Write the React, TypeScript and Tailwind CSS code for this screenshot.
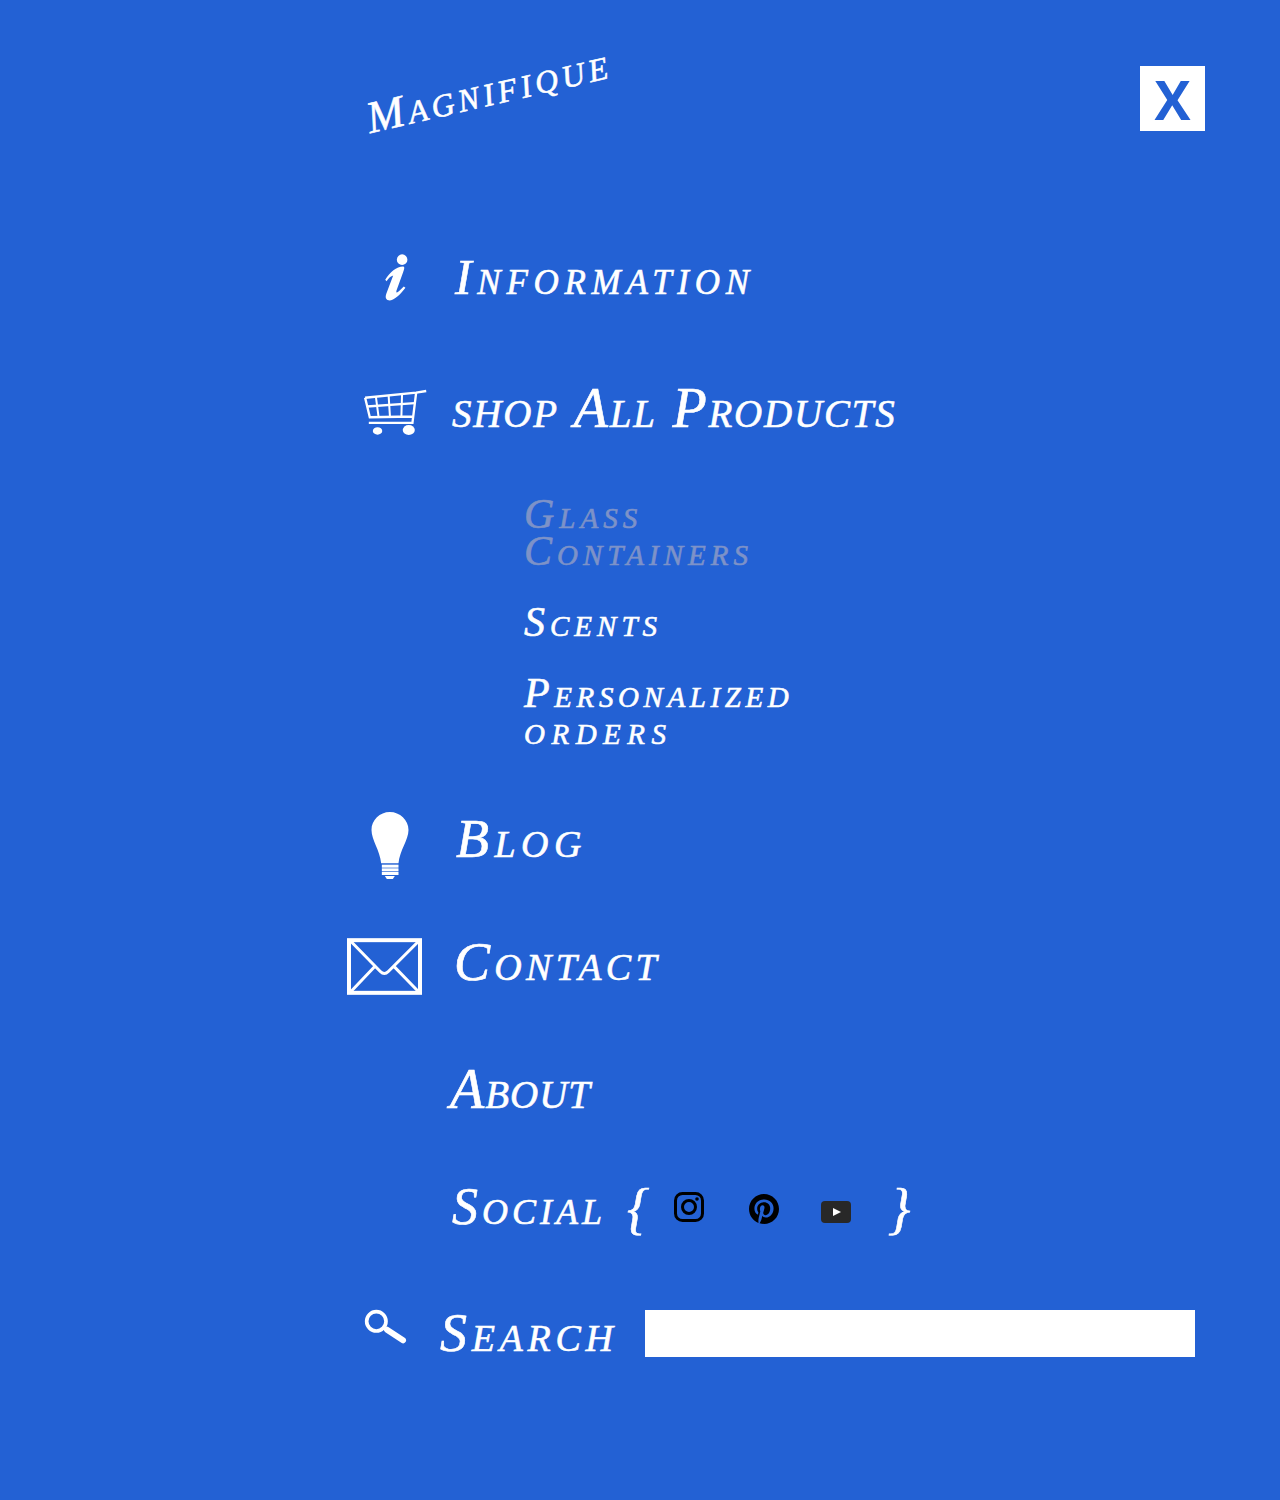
import React from 'react';

const hand = "font-['Liberation_Serif',serif] italic [font-variant:small-caps] [-webkit-text-stroke:0.6px_currentColor]";

const InfoIcon = () => (
  <svg className="ml-[36px] mb-[4px] w-[27px] h-[48px]" viewBox="130 70 80 145" fill="white">
    <circle cx="187" cy="87" r="16" />
    <path d="M136 148C150 125 170 108 190 108C196 108 193 118 190 125L170 180C168 188 172 188 178 182L192 168L197 172C180 195 160 212 146 210C136 208 136 198 140 188L160 135C150 138 145 145 140 152Z" />
  </svg>
);

const CartIcon = () => (
  <svg className="ml-[16px] mt-[5px] w-[64px] h-[47px]" viewBox="70 480 190 140" fill="none" stroke="white" strokeWidth="7">
    <path d="M76 506L228 491L258 486" />
    <path d="M76 506L90 564L218 562M228 491L217 581H87" />
    <path d="M82 532L224 522" />
    <path d="M108 503L116 563M146 499L150 563M186 495L184 562" strokeWidth="6" />
    <ellipse cx="113" cy="605" rx="14" ry="11" fill="white" stroke="none" />
    <ellipse cx="206" cy="602" rx="18" ry="15" fill="white" stroke="none" />
  </svg>
);

const BulbIcon = () => (
  <svg className="ml-[23px] mt-[8px] w-[40px] h-[67px]" viewBox="93 36 111 201" fill="white">
    <path d="M148 36C118 36 93 60 93 90C93 120 118 150 122 190H174C178 150 204 120 204 90C204 60 178 36 148 36Z" />
    <rect x="124" y="194" width="50" height="9" />
    <rect x="124" y="205" width="50" height="9" />
    <rect x="124" y="216" width="50" height="9" />
    <path d="M133 228H163L157 237H139Z" />
  </svg>
);

const MailIcon = () => (
  <svg className="mt-[4px] w-[75px] h-[57px]" viewBox="0 0 225 170" fill="none" stroke="white">
    <rect x="6" y="6" width="213" height="158" strokeWidth="12" />
    <path d="M12 10L100 100Q112 112 124 100L214 10M84 84L12 160M140 84L214 160" strokeWidth="9" />
  </svg>
);

const SearchIcon = () => (
  <svg className="ml-[16px] mb-[14px] w-[44px] h-[35px]" viewBox="40 60 132 105" fill="none" stroke="white">
    <circle cx="80" cy="97" r="29" strokeWidth="11" />
    <path d="M112 122L160 154" strokeWidth="18" strokeLinecap="round" />
  </svg>
);

const Instagram = () => (
  <svg className="mb-[4px] w-[30px] h-[30px]" viewBox="0 0 30 30" fill="none" stroke="black" strokeWidth="3">
    <rect x="1.5" y="1.5" width="27" height="27" rx="7" />
    <circle cx="15" cy="15" r="6.5" />
    <circle cx="23" cy="7" r="1.8" fill="black" stroke="none" />
  </svg>
);

const Pinterest = () => (
  <svg className="w-[30px] h-[30px]" viewBox="0 0 24 24" fill="black">
    <path d="M12 0C5.37 0 0 5.37 0 12c0 5.09 3.16 9.44 7.63 11.18-.1-.95-.2-2.41.04-3.45.22-.94 1.4-5.96 1.4-5.96s-.36-.72-.36-1.78c0-1.67.97-2.91 2.17-2.91 1.02 0 1.52.77 1.52 1.69 0 1.03-.65 2.57-.99 4-.28 1.19.6 2.17 1.78 2.17 2.13 0 3.77-2.25 3.77-5.49 0-2.87-2.06-4.88-5.01-4.88-3.41 0-5.42 2.56-5.42 5.21 0 1.03.4 2.14.89 2.74.1.12.11.22.08.34-.09.38-.29 1.19-.33 1.36-.05.22-.17.27-.4.16-1.5-.7-2.43-2.89-2.43-4.65 0-3.78 2.75-7.26 7.92-7.26 4.16 0 7.39 2.97 7.39 6.93 0 4.13-2.61 7.46-6.23 7.46-1.22 0-2.36-.63-2.75-1.38l-.75 2.85c-.27 1.04-1 2.35-1.49 3.14C9.57 23.81 10.76 24 12 24c6.63 0 12-5.37 12-12S18.63 0 12 0z" />
  </svg>
);

const YouTube = () => (
  <svg className="w-[30px] h-[22px]" viewBox="0 0 30 22">
    <rect width="30" height="22" rx="4" fill="#282828" />
    <path d="M12 7L20 11L12 15Z" fill="white" />
  </svg>
);

const Row = ({ icon, text, className }: { icon?: React.ReactNode; text: string; className: string }) => (
  <a className="flex items-center h-[60px]">
    <span className="flex items-center w-[105px]">{icon}</span>
    <span className={`${hand} ${className}`}>{text}</span>
  </a>
);

export default function App() {
  return (
    <div className="h-[1500px] bg-[#2361d4] text-white overflow-hidden">
      <header className="flex justify-between h-[131px] pt-[66px] pl-[372px] pr-[75px]">
        <a className={`${hand} text-[45px] leading-none h-[45px] -rotate-[13deg] origin-bottom-left mt-[30px] tracking-[4.2px]`}>Magnifique</a>
        <button className="w-[65px] h-[65px] bg-white text-[#2361d4] text-[54px] leading-none font-bold font-['Open_Sans',sans-serif]">X</button>
      </header>

      <nav className="ml-[347px] mt-[119px]">
        <Row icon={<InfoIcon />} text="Information" className="text-[50px] leading-none tracking-[5.7px] pl-[3px] pb-[6px]" />
        <div className="mt-[70px]">
          <Row icon={<CartIcon />} text="shop All Products" className="text-[56px] leading-none tracking-[1.8px] pb-[4px]" />
        </div>

        <ul className="ml-[177px] w-[290px]">
          <li className={`${hand} mt-[56px] w-[260px] text-[42px] leading-[37px] tracking-[5px] text-[#7d92c8]`}>Glass Containers</li>
          <li className={`${hand} mt-[34px] text-[42px] leading-[37px] tracking-[5px]`}>Scents</li>
          <li className={`${hand} mt-[34px] text-[42px] leading-[37px] tracking-[4.6px]`}>
            Personalized <span className="tracking-[6.5px]">orders</span>
          </li>
        </ul>

        <div className="mt-[62px]">
          <Row icon={<BulbIcon />} text="Blog" className="text-[54px] leading-none tracking-[5.5px] pl-[4px] pb-[4px]" />
        </div>
        <div className="mt-[63px]">
          <Row icon={<MailIcon />} text="Contact" className="text-[54px] leading-none tracking-[4.3px] pl-[2px] pb-[4px]" />
        </div>
        <div className="mt-[65px]">
          <Row text="About" className="text-[56px] leading-none tracking-[1px] -ml-[2px]" />
        </div>

        <div className="flex items-center h-[60px] mt-[60px]">
          <span className={`${hand} ml-[105px] w-[175px] pb-[4px] text-[52px] leading-none tracking-[4px]`}>Social</span>
          <span className={`${hand} w-[47px] text-[56px] leading-none`}>{'{'}</span>
          <Instagram />
          <span className="ml-[45px]"><Pinterest /></span>
          <span className="ml-[42px] mt-[6px]"><YouTube /></span>
          <span className={`${hand} ml-[37px] text-[56px] leading-none`}>{'}'}</span>
        </div>

        <div className="flex items-center h-[60px] mt-[64px]">
          <span className="flex items-center w-[93px]"><SearchIcon /></span>
          <span className={`${hand} w-[205px] text-[54px] leading-none tracking-[4.7px]`}>Search</span>
          <input className="w-[550px] h-[47px] bg-white" aria-label="Search" />
        </div>
      </nav>
    </div>
  );
}
